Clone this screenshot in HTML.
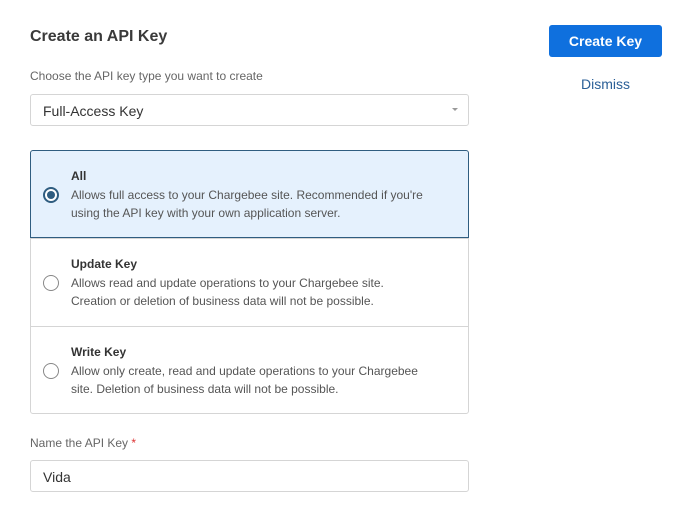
<!DOCTYPE html>
<html><head><meta charset="utf-8"><style>
*{box-sizing:border-box;margin:0;padding:0}
body{width:688px;height:506px;background:#fff;font-family:"Liberation Sans",sans-serif;color:#333;position:relative;overflow:hidden}
.abs{position:absolute}
h1{position:absolute;left:30px;top:28px;font-size:16px;font-weight:bold;color:#3a3a3a}
.lbl{font-size:12px;color:#666}
.box{position:absolute;left:30px;width:439px;border:1px solid #d5d5d5;border-radius:3px;background:#fff}
.opt{position:absolute;left:30px;width:439px;height:88px;border:1px solid #d5d5d5}
.opt .t{position:absolute;left:40px;top:18px;font-size:12px;font-weight:bold;color:#333}
.opt .d{position:absolute;left:40px;top:35px;font-size:12px;line-height:18px;color:#555;white-space:nowrap}
.opt .r{position:absolute;left:12px;top:36px;width:16px;height:16px;border:1.5px solid #888;border-radius:50%;background:#fff}
.sel{background:#e5f1fd;border-color:#2f5d80}
.sel .r{border:2px solid #2f5d80}
.sel .r::after{content:"";position:absolute;left:2px;top:2px;width:8px;height:8px;border-radius:50%;background:#2f5d80}
</style></head><body>
<h1>Create an API Key</h1>
<div class="abs lbl" style="left:30px;top:69px">Choose the API key type you want to create</div>
<div class="box" style="top:94px;height:32px"><span class="abs" style="left:12px;top:8px;font-size:14px;color:#333">Full-Access Key</span><span class="abs" style="right:10px;top:13px;width:0;height:0;border-left:3px solid transparent;border-right:3px solid transparent;border-top:3px solid #999"></span></div>
<div class="opt" style="top:238px;height:89px"><div class="r"></div><div class="t">Update Key</div><div class="d">Allows read and update operations to your Chargebee site.<br>Creation or deletion of business data will not be possible.</div></div>
<div class="opt" style="top:326px;border-radius:0 0 3px 3px"><div class="r"></div><div class="t">Write Key</div><div class="d">Allow only create, read and update operations to your Chargebee<br>site. Deletion of business data will not be possible.</div></div>
<div class="opt sel" style="top:150px;border-radius:3px 3px 0 0"><div class="r"></div><div class="t">All</div><div class="d">Allows full access to your Chargebee site. Recommended if you're<br>using the API key with your own application server.</div></div>
<div class="abs lbl" style="left:30px;top:436px">Name the API Key <span style="color:#d33">*</span></div>
<div class="box" style="top:460px;height:32px"><span class="abs" style="left:12px;top:8px;font-size:14px;color:#333">Vida</span></div>
<div class="abs" style="left:549px;top:25px;width:113px;height:32px;background:#0f70de;border-radius:3px;color:#fff;font-size:14px;font-weight:bold;text-align:center;line-height:32px">Create Key</div>
<div class="abs" style="left:549px;top:76px;width:113px;text-align:center;font-size:14px;color:#2a5f97">Dismiss</div>
</body></html>
